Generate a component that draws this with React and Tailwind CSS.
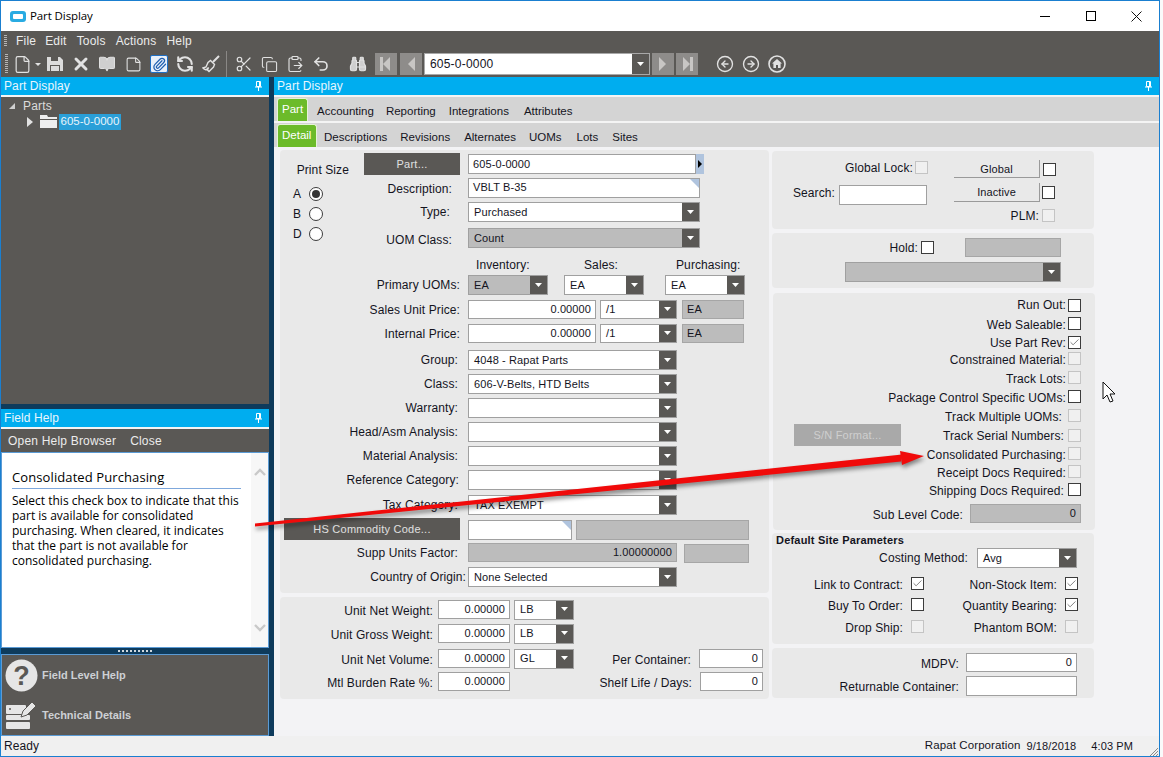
import React from 'react';
import {
  File, X, BookOpen, StickyNote, Paperclip, RefreshCcw, Scissors, Copy,
  ClipboardPaste, Undo2, Binoculars, CircleArrowLeft, CircleArrowRight, Check,
} from 'lucide-react';

const Caret = () => (
  <svg width="7" height="5" viewBox="0 0 7 5"><path d="M0 0h7L3.5 4z" fill="#fff" /></svg>
);

const PinIcon = () => (
  <svg width="7" height="10" viewBox="0 0 7 10" fill="none" stroke="#fff" strokeWidth="1">
    <path d="M1.5.5h4v5h-4zM0 6h7M3.5 6v4M4.5 1v4" />
  </svg>
);

const Grip = ({ className = 'h-[20px]' }) => (
  <div className={`w-[3px] bg-[repeating-linear-gradient(to_bottom,#b5b5b5_0,#b5b5b5_1px,transparent_1px,transparent_2px)] ${className}`} />
);

const Label = ({ className = '', children }) => (
  <span className={`block shrink-0 whitespace-nowrap text-right text-[12px] tracking-[0.1px] text-[#14141e] ${className}`}>{children}</span>
);

const Input = ({ className = '', value, right, note }) => (
  <div className={`relative flex shrink-0 items-center border border-[#a0a0a0] bg-white px-[4px] text-[11px] tracking-[0.1px] text-[#14141e] ${right ? 'justify-end' : ''} ${className}`}>
    {value}
    {note && <span className="absolute right-0 top-0 h-0 w-0 border-l-[9px] border-t-[9px] border-l-transparent border-t-[#b0c4de]" />}
  </div>
);

const ReadOnly = ({ className = '', value, right }) => (
  <div className={`flex shrink-0 items-center border border-[#a6a6a6] bg-[#bcbcbc] px-[4px] text-[11px] tracking-[0.1px] text-[#14141e] ${right ? 'justify-end' : ''} ${className}`}>{value}</div>
);

const Combo = ({ className = '', height = 'h-[20px]', value, disabled }) => (
  <div className={`flex shrink-0 items-stretch border border-[#a0a0a0] text-[11px] tracking-[0.1px] text-[#14141e] ${height} ${disabled ? 'bg-[#bcbcbc]' : 'bg-white'} ${className}`}>
    <span className="flex flex-1 items-center overflow-hidden whitespace-nowrap pl-[5px]">{value}</span>
    <span className="flex w-[17px] items-center justify-center bg-[#5a5855]"><Caret /></span>
  </div>
);

const Box = ({ className = '', checked, disabled }) => (
  <span className={`flex h-[13px] w-[13px] shrink-0 items-center justify-center border ${disabled ? 'border-[#c4c4c4] bg-[#f0f0f0]' : 'border-[#3c3c3c] bg-white'} ${className}`}>
    {checked && <Check size={11} strokeWidth={1.6} className="text-[#555]" />}
  </span>
);

const Row = ({ className = '', label, pad = 'pr-[8px]', children }) => (
  <div className={`flex items-center ${className}`}>
    <Label className={`w-[188px] ${pad}`}>{label}</Label>
    {children}
  </div>
);

const Panel = ({ className = '', children }) => (
  <div className={`rounded-[4px] bg-[#e9e9e9] ${className}`}>{children}</div>
);

const CheckRow = ({ className = '', label, lift = 'pt-[2px]', pad = 'pr-[1px]', checked, disabled, children }) => (
  <div className={`flex h-[13px] items-start pr-[14px] ${className}`}>
    {children}
    <span className={`ml-auto block text-right text-[12px] leading-[13px] tracking-[0.1px] text-[#14141e] ${lift} ${pad}`}>{label}</span>
    <Box checked={checked} disabled={disabled} className="ml-[1px]" />
  </div>
);

const PaneHeader = ({ title }) => (
  <>
    <div className="flex h-[18px] items-center justify-between bg-[#00adef] pl-[3px] pr-[7px] text-[12px] tracking-[0.1px] text-[#e8f6fd]">
      {title}
      <PinIcon />
    </div>
    <div className="h-[2px] bg-[#f4f4f4]" />
  </>
);

const Tab = ({ children, active, className = '' }) =>
  active ? (
    <div className={`flex items-center self-end rounded-t-[3px] border border-b-0 border-[#e6f3d8] bg-[#6cbb2a] px-[4px] text-[11.5px] text-white ${className}`}>{children}</div>
  ) : (
    <div className={`flex items-center pt-[5px] text-[11.5px] text-[#14141e] ${className}`}>{children}</div>
  );

const toolIcon = 'shrink-0 text-[#e2e2e2]';

const NavBtn = ({ flip, bar, className = '' }) => (
  <div className={`flex h-[22px] w-[22px] shrink-0 items-center justify-center bg-[#8e8c8a] ${className}`}>
    <svg width="14" height="16" viewBox="0 0 14 16" fill="#c8c6c4">
      {flip ? <path d="M3 1l7 7-7 7z" /> : <path d="M11 1L4 8l7 7z" />}
      {bar && <rect x={flip ? 10 : 1} y="1" width="3" height="14" />}
    </svg>
  </div>
);

const Toolbar = () => (
  <div className="flex h-[26px] items-center bg-[#5a5855]">
    <Grip className="ml-[4px] h-[20px]" />
    <File size={19} strokeWidth={1.5} className={`${toolIcon} ml-[5px]`} />
    <span className="ml-[3px] h-0 w-0 border-x-[3px] border-t-[3px] border-x-transparent border-t-[#e2e2e2]" />
    <svg width="16" height="16" viewBox="0 0 16 16" className="ml-[6px] shrink-0" fill="#dcdcdc">
      <path d="M0 1h13l3 3v11H0z" />
      <path d="M4 1h7v4H4zM3 9h10v6H3z" fill="#5a5855" />
      <path d="M4 10h8v5H4z" fill="#dcdcdc" />
    </svg>
    <X size={20} strokeWidth={3.6} className={`${toolIcon} ml-[8px]`} />
    <BookOpen size={18} strokeWidth={1.3} fill="#cfcfcf" className={`${toolIcon} ml-[7px]`} />
    <StickyNote size={17} strokeWidth={1.5} className={`${toolIcon} ml-[9px]`} />
    <div className="ml-[8px] flex h-[18px] w-[18px] shrink-0 items-center justify-center rounded-[2px] border border-[#1f6fc4] bg-[#e8f0fa]">
      <Paperclip size={15} strokeWidth={2} className="text-[#1f5fb0]" />
    </div>
    <RefreshCcw size={18} strokeWidth={2.8} className={`${toolIcon} ml-[8px]`} />
    <svg width="18" height="18" viewBox="0 0 18 18" fill="none" stroke="#e2e2e2" strokeWidth="1.4" className="ml-[8px] shrink-0">
      <path d="M17 1l-6 6" strokeWidth="2" />
      <path d="M8.5 5.5l4 4-1 2.5-4.5 4.5-1.5-1.5 1-2.5-2.5 2.5-2-1-1-1 3-1 2-4.5z" />
    </svg>
    <div className="ml-[6px] h-[26px] w-[1px] bg-[#8a8886]" />
    <Scissors size={18} strokeWidth={1.6} className={`${toolIcon} ml-[8px]`} />
    <Copy size={17} strokeWidth={1.5} className={`${toolIcon} ml-[8px]`} />
    <ClipboardPaste size={18} strokeWidth={1.5} className={`${toolIcon} ml-[8px]`} />
    <Undo2 size={18} strokeWidth={2.2} className={`${toolIcon} ml-[8px]`} />
    <Grip className="ml-[7px]" />
    <Binoculars size={18} strokeWidth={1.6} fill="#cfcfcf" className={`${toolIcon} ml-[9px]`} />
    <NavBtn bar className="ml-[8px]" />
    <NavBtn className="ml-[3px]" />
    <div className="ml-[2px] flex h-[22px] w-[226px] shrink-0 items-stretch border border-[#a8a8a8] bg-white text-[12px] text-[#14141e]">
      <span className="flex flex-1 items-center pl-[5px] tracking-[0.2px]">605-0-0000</span>
      <span className="flex w-[17px] items-center justify-center bg-[#5a5855]"><Caret /></span>
    </div>
    <NavBtn flip className="ml-[2px]" />
    <NavBtn flip bar className="ml-[2px]" />
    <Grip className="ml-[6px]" />
    <CircleArrowLeft size={18} strokeWidth={1.8} className={`${toolIcon} ml-[9px]`} />
    <CircleArrowRight size={18} strokeWidth={1.8} className={`${toolIcon} ml-[8px]`} />
    <svg width="18" height="18" viewBox="0 0 18 18" className="ml-[8px] shrink-0">
      <circle cx="9" cy="9" r="8" fill="none" stroke="#e2e2e2" strokeWidth="1.6" />
      <path d="M9 4l5 4.5h-1.4V13H10v-3H8v3H5.4V8.5H4z" fill="#e2e2e2" />
    </svg>
  </div>
);

const LeftPane = () => (
  <div className="flex w-[268px] shrink-0 flex-col">
    <PaneHeader title="Part Display" />
    <div className="h-[307px] bg-[#5a5855] text-[12px] text-[#dcdcdc]">
      <div className="flex h-[16px] items-center pl-[8px] pt-[1px]">
        <span className="h-0 w-0 border-b-[6px] border-l-[6px] border-b-[#cfcfcf] border-l-transparent" />
        <span className="ml-[8px] tracking-[0.2px]">Parts</span>
      </div>
      <div className="flex h-[17px] items-center pl-[26px]">
        <span className="h-0 w-0 border-y-[5px] border-l-[6px] border-y-transparent border-l-[#e2e2e2]" />
        <svg width="17" height="13" viewBox="0 0 17 13" className="ml-[7px]" fill="#eee"><path d="M0 0h7l1 2h9v2H0zM0 5h17v8H0z" /></svg>
        <span className="ml-[2px] flex h-[16px] w-[62px] items-center justify-center whitespace-nowrap bg-[#2a9fd8] text-[11.5px] text-[#e8f4fb]">605-0-0000</span>
      </div>
    </div>
    <div className="h-[5px] bg-[#0e3b5c]" />
    <PaneHeader title="Field Help" />
    <div className="flex h-[23px] items-center gap-[14px] bg-[#5a5855] pl-[7px] text-[12px] tracking-[0.2px] text-[#ececec]">
      <span>Open Help Browser</span>
      <span>Close</span>
    </div>
    <div className="flex h-[196px] border border-[#5b9bd5] bg-white">
      <div className="flex-1 pl-[10px] pt-[15px] font-['Open_Sans',sans-serif] text-black">
        <div className="w-[229px] border-b border-[#7fa8dc] pb-[1px] text-[13px] leading-[19px] tracking-[0.1px]">Consolidated Purchasing</div>
        <p className="mt-[4px] w-[232px] text-[12px] leading-[15px]">
          Select this check box to indicate that this part is available for consolidated purchasing. When cleared, it indicates that the part is not available for consolidated purchasing.
        </p>
      </div>
      <div className="flex w-[17px] flex-col items-center justify-between bg-[#f7f7f7] pb-[15px] pt-[15px]">
        <svg width="12" height="8" viewBox="0 0 12 8" fill="none" stroke="#c9c9c9" strokeWidth="2.4"><path d="M1 7l5-5 5 5" /></svg>
        <svg width="12" height="8" viewBox="0 0 12 8" fill="none" stroke="#c9c9c9" strokeWidth="2.4"><path d="M1 1l5 5 5-5" /></svg>
      </div>
    </div>
    <div className="flex h-[6px] items-center justify-center bg-[#0e3b5c]">
      <div className="h-[2px] w-[35px] bg-[repeating-linear-gradient(to_right,#cfd8df_0,#cfd8df_2px,transparent_2px,transparent_4px)]" />
    </div>
    <div className="flex h-[82px] flex-col border border-[#5b9bd5] bg-[#5a5855] text-[11px] font-bold text-[#cdd0d4]">
      <div className="mt-[4px] flex items-center pl-[3px]">
        <svg width="33" height="33" viewBox="0 0 33 33">
          <circle cx="16.5" cy="16.5" r="16" fill="#e6e6e6" />
          <text x="16.5" y="26" textAnchor="middle" fontSize="27" fontWeight="700" fontFamily="Liberation Sans, sans-serif" fill="#5a5855">?</text>
        </svg>
        <span className="ml-[4px]">Field Level Help</span>
      </div>
      <div className="mt-[8px] flex items-center pl-[3px]">
        <svg width="32" height="30" viewBox="0 0 32 30" fill="#e6e6e6">
          <rect x="1" y="5" width="20" height="9" rx="1" />
          <rect x="1" y="15" width="24" height="5" rx="1" />
          <rect x="1" y="22" width="24" height="7" rx="1" />
          <circle cx="5" cy="9" r="1" fill="#5a5855" />
          <path d="M16 17l2-6 9-9 4 4-9 9z" stroke="#5a5855" strokeWidth="1" />
        </svg>
        <span className="ml-[5px]">Technical Details</span>
      </div>
    </div>
  </div>
);

const DarkButton = ({ className = '', children }) => (
  <div className={`flex h-[22px] items-center justify-center bg-[#5a5855] text-[11px] tracking-[0.25px] text-[#e0e0e0] ${className}`}>{children}</div>
);

const PartPanel = () => (
  <Panel className="h-[443px] w-[489px]">
    <div className="flex">
      <div className="w-[84px] shrink-0 pt-[11px]">
        <Label className="w-[69px]">Print Size</Label>
        <div className="mt-[8px] flex flex-col gap-[6px] pl-[13px] text-[12px] text-[#14141e]">
          {[['A', true], ['B', false], ['D', false]].map(([letter, on]) => (
            <div key={letter} className="flex h-[14px] items-center">
              <span className="w-[16px]">{letter}</span>
              <span className="flex h-[14px] w-[14px] items-center justify-center rounded-full border border-[#3c3c3c] bg-white">
                {on && <span className="h-[8px] w-[8px] rounded-full bg-[#333]" />}
              </span>
            </div>
          ))}
        </div>
      </div>
      <div className="flex-1">
        <div className="mt-[3px] flex h-[22px] items-center">
          <DarkButton className="w-[96px]">Part...</DarkButton>
          <Input className="ml-[8px] h-[20px] w-[228px]" value="605-0-0000" />
          <div className="flex h-[20px] w-[8px] items-center justify-center bg-[#b0c4de]">
            <span className="h-0 w-0 border-y-[4px] border-l-[4px] border-y-transparent border-l-black" />
          </div>
        </div>
        <div className="mt-[3px] flex h-[20px] items-center">
          <Label className="w-[104px] pr-[16px] pt-[1px]">Description:</Label>
          <Input className="h-[20px] w-[232px] !items-start" value="VBLT B-35" note />
        </div>
        <div className="mt-[4px] flex h-[20px] items-center">
          <Label className="w-[104px] pr-[18px]">Type:</Label>
          <Combo className="w-[232px]" value="Purchased" />
        </div>
        <div className="mt-[6px] flex h-[20px] items-center">
          <Label className="w-[104px] pr-[16px] pt-[4px]">UOM Class:</Label>
          <Combo className="w-[232px]" value="Count" disabled />
        </div>
      </div>
    </div>
    <div className="mt-[10px] flex h-[14px] items-center pl-[196px] text-[12px] tracking-[0.1px] text-[#14141e]">
      <span className="w-[108px]">Inventory:</span>
      <span className="w-[92px]">Sales:</span>
      <span>Purchasing:</span>
    </div>
    <Row className="mt-[3px]" label="Primary UOMs:">
      <Combo className="w-[80px]" value="EA" disabled />
      <Combo className="ml-[16px] w-[80px]" value="EA" />
      <Combo className="ml-[21px] w-[80px]" value="EA" />
    </Row>
    <Row className="mt-[5px]" label="Sales Unit Price:">
      <Input className="h-[19px] w-[128px]" value="0.00000" right />
      <Combo className="ml-[4px] w-[77px]" height="h-[19px]" value="/1" />
      <ReadOnly className="ml-[5px] h-[19px] w-[62px]" value="EA" />
    </Row>
    <Row className="mt-[5px]" label="Internal Price:">
      <Input className="h-[19px] w-[128px]" value="0.00000" right />
      <Combo className="ml-[4px] w-[77px]" height="h-[19px]" value="/1" />
      <ReadOnly className="ml-[5px] h-[19px] w-[62px]" value="EA" />
    </Row>
    <Row className="mt-[7px]" label="Group:" pad="pr-[10px]"><Combo className="w-[209px]" value="4048 - Rapat Parts" /></Row>
    <Row className="mt-[4px]" label="Class:" pad="pr-[10px]"><Combo className="w-[209px]" value="606-V-Belts, HTD Belts" /></Row>
    <Row className="mt-[4px]" label="Warranty:" pad="pr-[10px]"><Combo className="w-[209px]" /></Row>
    <Row className="mt-[4px]" label="Head/Asm Analysis:" pad="pr-[10px]"><Combo className="w-[209px]" /></Row>
    <Row className="mt-[4px]" label="Material Analysis:" pad="pr-[10px]"><Combo className="w-[209px]" /></Row>
    <Row className="mt-[4px]" label="Reference Category:" pad="pr-[9px]"><Combo className="w-[209px]" /></Row>
    <Row className="mt-[5px]" label="Tax Category:" pad="pr-[10px]"><Combo className="w-[209px]" value="TAX EXEMPT" /></Row>
    <div className="mt-[3px] flex items-end pl-[4px]">
      <DarkButton className="w-[176px]">HS Commodity Code...</DarkButton>
      <Input className="ml-[8px] h-[20px] w-[104px]" note />
      <ReadOnly className="ml-[4px] h-[20px] w-[173px]" />
    </div>
    <Row className="mt-[3px] h-[19px]" label="Supp Units Factor:" pad="pr-[10px]">
      <ReadOnly className="h-[19px] w-[209px]" value="1.00000000" right />
      <ReadOnly className="ml-[7px] mt-[1px] h-[19px] w-[65px]" />
    </Row>
    <Row className="mt-[5px]" label="Country of Origin:" pad="pr-[2px]"><Combo className="w-[209px]" value="None Selected" /></Row>
  </Panel>
);

const WeightRow = ({ className = '', label, unit, children }) => (
  <div className={`flex h-[19px] items-center ${className}`}>
    <Label className="w-[153px] pt-[3px]">{label}</Label>
    <Input className="ml-[5px] h-[19px] w-[72px]" value="0.00000" right />
    {unit && <Combo className="ml-[4px] w-[60px]" value={unit} />}
    {children}
  </div>
);

const WeightPanel = () => (
  <Panel className="mt-[4px] h-[102px] w-[489px] pt-[3px]">
    <WeightRow label="Unit Net Weight:" unit="LB" />
    <WeightRow className="mt-[5px]" label="Unit Gross Weight:" unit="LB" />
    <WeightRow className="mt-[6px]" label="Unit Net Volume:" unit="GL">
      <Label className="ml-auto pt-[2px]">Per Container:</Label>
      <Input className="ml-[8px] mr-[6px] h-[19px] w-[64px]" value="0" right />
    </WeightRow>
    <WeightRow className="mt-[4px]" label="Mtl Burden Rate %:">
      <Label className="ml-auto pt-[3px]">Shelf Life / Days:</Label>
      <Input className="ml-[8px] mr-[6px] h-[19px] w-[63px]" value="0" right />
    </WeightRow>
  </Panel>
);

const FlagButton = ({ children, className = '' }) => (
  <div className={`flex w-[86px] items-center justify-center border-b border-r border-[#9a9a9a] text-[11px] tracking-[0.1px] text-[#14141e] ${className}`}>{children}</div>
);

const GlobalPanel = () => (
  <Panel className="flex h-[78px] w-[322px] pt-[9px]">
    <div className="w-[182px] shrink-0">
      <div className="flex h-[14px] items-center justify-end pr-[26px]">
        <Label className="mr-[2px] pt-[1px]">Global Lock:</Label>
        <Box disabled />
      </div>
      <div className="mt-[10px] flex items-center justify-end pr-[27px]">
        <Label className="mr-[4px] pb-[3px]">Search:</Label>
        <Input className="h-[20px] w-[88px]" />
      </div>
    </div>
    <div>
      <div className="flex items-center">
        <FlagButton className="h-[18px] pt-[1px]">Global</FlagButton>
        <Box className="ml-[3px]" />
      </div>
      <div className="mt-[5px] flex items-center">
        <FlagButton className="h-[19px]">Inactive</FlagButton>
        <Box className="ml-[2px]" />
      </div>
      <div className="mt-[7px] flex h-[13px] w-[101px] items-center justify-end">
        <Label className="mr-[3px]">PLM:</Label>
        <Box disabled />
      </div>
    </div>
  </Panel>
);

const HoldPanel = () => (
  <Panel className="mt-[4px] h-[55px] w-[322px] pt-[5px]">
    <div className="flex h-[19px] items-center">
      <Label className="w-[146px]">Hold:</Label>
      <Box className="ml-[3px]" />
      <ReadOnly className="ml-[31px] h-[19px] w-[96px]" />
    </div>
    <Combo className="ml-[73px] mt-[5px] w-[216px]" disabled />
  </Panel>
);

const FlagsPanel = () => (
  <Panel className="ml-[1px] mt-[5px] h-[237px] w-[322px] pt-[6px]">
    <CheckRow label="Run Out:" lift="pt-[0px]" />
    <CheckRow className="mt-[5px]" label="Web Saleable:" />
    <CheckRow className="mt-[6px]" label="Use Part Rev:" lift="pt-[1px]" checked />
    <CheckRow className="mt-[3px]" label="Constrained Material:" disabled />
    <CheckRow className="mt-[6px]" label="Track Lots:" disabled />
    <CheckRow className="mt-[6px]" label="Package Control Specific UOMs:" />
    <CheckRow className="mt-[6px]" label="Track Multiple UOMs:" pad="pr-[5px]" disabled />
    <CheckRow className="mt-[7px]" label="Track Serial Numbers:" lift="pt-[1px]" pad="pr-[3px]" disabled>
      <div className="-mt-[5px] ml-[21px] flex h-[22px] w-[107px] shrink-0 items-center justify-center bg-[#a9a9a9] text-[11px] tracking-[0.2px] text-[#cfcfcf]">S/N Format...</div>
    </CheckRow>
    <CheckRow className="mt-[5px]" label="Consolidated Purchasing:" disabled />
    <CheckRow className="mt-[5px]" label="Receipt Docs Required:" disabled />
    <CheckRow className="mt-[5px]" label="Shipping Docs Required:" pad="pr-[3px]" />
    <div className="mt-[8px] flex h-[19px] items-center justify-end pr-[14px]">
      <Label className="mr-[7px] pt-[3px]">Sub Level Code:</Label>
      <ReadOnly className="h-[19px] w-[111px]" value="0" right />
    </div>
  </Panel>
);

const SiteCheck = ({ label, checked, disabled, className = '' }) => (
  <div className={`flex h-[13px] items-center ${className}`}>
    <Label className="ml-auto mr-[8px] pt-[2px]">{label}</Label>
    <Box checked={checked} disabled={disabled} />
  </div>
);

const SitePanel = () => (
  <Panel className="mt-[3px] h-[111px] w-[322px] pt-[1px]">
    <div className="pl-[4px] text-[11px] font-bold leading-[13px] tracking-[0.2px] text-[#14141e]">Default Site Parameters</div>
    <div className="mt-[1px] flex items-center">
      <Label className="w-[196px]">Costing Method:</Label>
      <Combo className="ml-[9px] w-[100px]" value="Avg" />
    </div>
    <div className="mt-[9px] grid w-[306px] grid-cols-[152px_154px] gap-y-[8px]">
      <SiteCheck label="Link to Contract:" checked />
      <SiteCheck label="Non-Stock Item:" checked />
      <SiteCheck label="Buy To Order:" />
      <SiteCheck label="Quantity Bearing:" checked />
      <SiteCheck className="mt-[1px]" label="Drop Ship:" disabled />
      <SiteCheck className="mt-[1px]" label="Phantom BOM:" disabled />
    </div>
  </Panel>
);

const ContainerPanel = () => (
  <Panel className="mt-[4px] h-[50px] w-[322px] pt-[5px]">
    <div className="flex h-[19px] items-center">
      <Label className="w-[187px] pt-[3px]">MDPV:</Label>
      <Input className="ml-[7px] h-[19px] w-[111px]" value="0" right />
    </div>
    <div className="mt-[4px] flex h-[20px] items-center">
      <Label className="w-[187px] pt-[2px]">Returnable Container:</Label>
      <Input className="ml-[7px] h-[20px] w-[111px]" />
    </div>
  </Panel>
);

const MainPane = () => (
  <div className="flex min-w-0 flex-1 flex-col bg-[#f3f3f5]">
    <PaneHeader title="Part Display" />
    <div className="flex h-[24px] bg-[#d4d4d4] pl-[3px]">
      <Tab active className="h-[23px] w-[31px]">Part</Tab>
      <Tab className="ml-[9px]">Accounting</Tab>
      <Tab className="ml-[12px]">Reporting</Tab>
      <Tab className="ml-[13px]">Integrations</Tab>
      <Tab className="ml-[15px]">Attributes</Tab>
    </div>
    <div className="h-[2px] bg-[#f4f4f4]" />
    <div className="flex h-[24px] bg-[#d4d4d4] pl-[3px]">
      <Tab active className="h-[23px] w-[40px]">Detail</Tab>
      <Tab className="ml-[7px]">Descriptions</Tab>
      <Tab className="ml-[13px]">Revisions</Tab>
      <Tab className="ml-[14px]">Alternates</Tab>
      <Tab className="ml-[13px]">UOMs</Tab>
      <Tab className="ml-[15px]">Lots</Tab>
      <Tab className="ml-[14px]">Sites</Tab>
    </div>
    <div className="flex gap-[3px] pl-[6px] pt-[3px]">
      <div>
        <PartPanel />
        <WeightPanel />
      </div>
      <div className="pt-[1px]">
        <GlobalPanel />
        <HoldPanel />
        <FlagsPanel />
        <SitePanel />
        <ContainerPanel />
      </div>
    </div>
  </div>
);

// red annotation arrow pasted over the screenshot
const Annotation = () => (
  <svg width="690" height="90" viewBox="0 0 690 90" className="absolute left-[250px] top-[445px] drop-shadow-[1px_3px_2px_rgba(0,0,0,0.45)]">
    <path d="M5 78.5L652 9.5l-1 7L5 81.5z" fill="#f00a0a" />
    <path d="M674 11L650 6l2 14z" fill="#f00a0a" />
  </svg>
);

const Cursor = () => (
  <svg width="14" height="22" viewBox="0 0 14 22" className="absolute left-[1102px] top-[381px]">
    <path d="M1 1v17l4-4 3 7 3-1-3-7h5z" fill="#fff" stroke="#111" strokeWidth="1" />
  </svg>
);

const App = () => {
  return (
    <div className="relative flex h-[757px] w-[1163px] overflow-hidden bg-white font-['Liberation_Sans',Arial,sans-serif]">
      <div className="flex h-[757px] w-[1160px] shrink-0 flex-col border border-[#1a7fd0]">
        {/* title bar */}
        <div className="flex h-[30px] items-center bg-white pl-[9px]">
          <span className="flex h-[11px] w-[16px] items-center justify-center rounded-[3px] bg-[#29abe2]">
            <span className="h-[5px] w-[10px] rounded-[1px] bg-white" />
          </span>
          <span className="ml-[4px] font-['Open_Sans',sans-serif] text-[11.5px] tracking-[-0.1px] text-black">Part Display</span>
          <div className="ml-auto flex items-center">
            <div className="flex w-[46px] justify-center"><span className="h-[1px] w-[10px] bg-black" /></div>
            <div className="flex w-[45px] justify-center"><span className="h-[10px] w-[10px] border border-black" /></div>
            <div className="flex w-[46px] justify-center">
              <svg width="11" height="11" viewBox="0 0 11 11" stroke="#111" strokeWidth="1"><path d="M.5.5l10 10M10.5.5l-10 10" /></svg>
            </div>
          </div>
        </div>
        {/* menu */}
        <div className="flex h-[20px] items-center bg-[#5a5855] text-[12px] tracking-[0.2px] text-[#ececec]">
          <Grip className="ml-[3px] h-[12px]" />
          <span className="ml-[9px]">File</span>
          <span className="ml-[9px]">Edit</span>
          <span className="ml-[10px]">Tools</span>
          <span className="ml-[10px]">Actions</span>
          <span className="ml-[10px]">Help</span>
        </div>
        <Toolbar />
        <div className="flex min-h-0 flex-1">
          <LeftPane />
          <div className="w-[5px] shrink-0 bg-[#0e3b5c]" />
          <MainPane />
        </div>
        {/* status bar */}
        <div className="flex h-[20px] items-center bg-[#f0f0f0] pl-[3px] text-[11.5px] tracking-[0.1px] text-[#14141e]">
          <span className="text-[12px]">Ready</span>
          <span className="ml-auto">Rapat Corporation</span>
          <span className="ml-[6px] text-[11px]">9/18/2018</span>
          <span className="ml-[15px] mr-[3px] text-[11px]">4:03 PM</span>
          <svg width="23" height="11" viewBox="0 0 23 11" stroke="#8a8a8a" strokeWidth="1" className="self-end">
            <path d="M22 3l-8 8M22 6l-5 5M22 9l-2 2" />
          </svg>
        </div>
      </div>
      <div className="flex-1 bg-[#fafafa]" />
      <Annotation />
      <Cursor />
    </div>
  );
};

export default App;
